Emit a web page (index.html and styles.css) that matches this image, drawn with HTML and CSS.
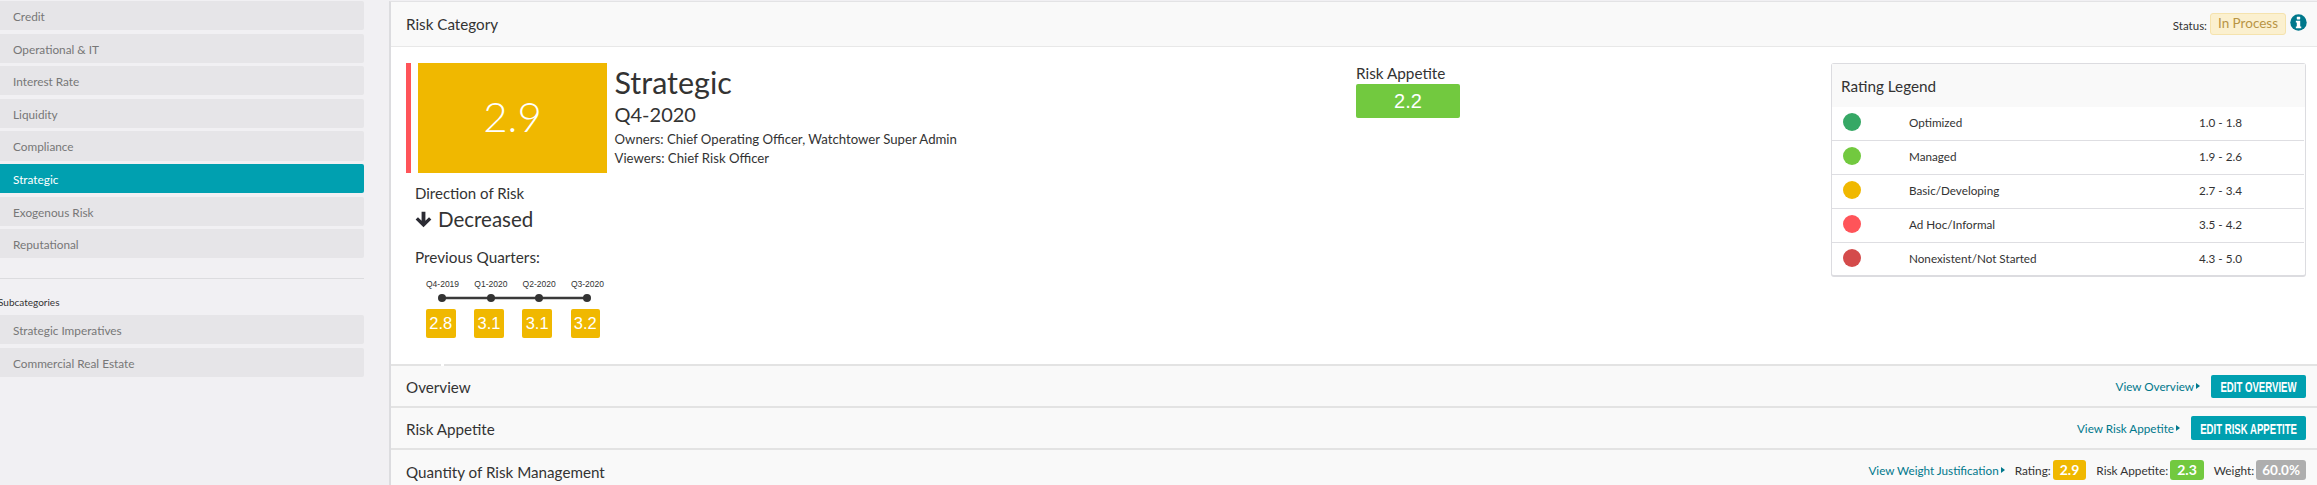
FILE: index.html
```html
<!DOCTYPE html>
<html lang="en">
<head>
<meta charset="utf-8">
<title>Risk Category</title>
<link rel="stylesheet" href="styles.css">
</head>
<body>
<div class="page">
  <aside class="sidebar">
    <nav class="nav">
      <a class="nav-item">Credit</a>
      <a class="nav-item">Operational &amp; IT</a>
      <a class="nav-item">Interest Rate</a>
      <a class="nav-item">Liquidity</a>
      <a class="nav-item">Compliance</a>
      <a class="nav-item active">Strategic</a>
      <a class="nav-item">Exogenous Risk</a>
      <a class="nav-item">Reputational</a>
    </nav>
    <hr class="side-rule">
    <div class="side-heading">Subcategories</div>
    <nav class="nav">
      <a class="nav-item">Strategic Imperatives</a>
      <a class="nav-item">Commercial Real Estate</a>
    </nav>
  </aside>
  <main class="panel">
    <header class="panel-head">
      <span class="row-title">Risk Category</span>
      <div class="status">
        <span class="status-label">Status:</span>
        <span class="status-pill">In Process</span>
        <svg class="info" viewBox="0 0 18 18" aria-hidden="true"><circle cx="9" cy="9" r="8.7" fill="#00788c"/><rect x="7.2" y="2.8" width="3.6" height="3" rx=".5" fill="#fff"/><path d="M6.2 7.2h4.6v6h1.1v1.9H6.2v-1.9h1v-4.1h-1z" fill="#fff"/></svg>
      </div>
    </header>
    <section class="overview">
      <div class="col-left">
        <div class="score-row">
          <div class="red-bar"></div>
          <div class="score">2.9</div>
          <div class="meta">
            <h1 class="meta-title">Strategic</h1>
            <div class="meta-q">Q4-2020</div>
            <div class="meta-line">Owners: Chief Operating Officer, Watchtower Super Admin</div>
            <div class="meta-line">Viewers: Chief Risk Officer</div>
          </div>
        </div>
        <div class="direction">
          <div class="label">Direction of Risk</div>
          <div class="dir-value">
            <svg class="arrow" viewBox="0 0 16 16" aria-hidden="true"><path d="M8 15.4 .6 8l2.2-2.2 3.4 3.4V.8h3.6v8.4l3.4-3.4L15.4 8z" fill="#2b2b33"/></svg>
            <span>Decreased</span>
          </div>
        </div>
        <div class="previous">
          <div class="label">Previous Quarters:</div>
          <div class="timeline">
            <div class="tl-labels"><span>Q4-2019</span><span>Q1-2020</span><span>Q2-2020</span><span>Q3-2020</span></div>
            <svg class="tl-line" viewBox="0 0 153 10" aria-hidden="true">
              <path d="M4 5H149" stroke="#3a3a3a" stroke-width="2.5"/>
              <circle cx="4" cy="5" r="4" fill="#333"/><circle cx="53" cy="5" r="4" fill="#333"/><circle cx="101" cy="5" r="4" fill="#333"/><circle cx="149" cy="5" r="4" fill="#333"/>
            </svg>
            <div class="tl-badges"><span class="q-badge">2.8</span><span class="q-badge">3.1</span><span class="q-badge">3.1</span><span class="q-badge">3.2</span></div>
          </div>
        </div>
      </div>
      <div class="col-mid">
        <div class="label">Risk Appetite</div>
        <div class="appetite">2.2</div>
      </div>
      <div class="legend">
        <div class="legend-head">Rating Legend</div>
        <div class="legend-row"><i class="dot c-opt"></i><span class="legend-name">Optimized</span><span class="legend-range">1.0 - 1.8</span></div>
        <div class="legend-row"><i class="dot c-man"></i><span class="legend-name">Managed</span><span class="legend-range">1.9 - 2.6</span></div>
        <div class="legend-row"><i class="dot c-bas"></i><span class="legend-name">Basic/Developing</span><span class="legend-range">2.7 - 3.4</span></div>
        <div class="legend-row"><i class="dot c-adh"></i><span class="legend-name">Ad Hoc/Informal</span><span class="legend-range">3.5 - 4.2</span></div>
        <div class="legend-row"><i class="dot c-non"></i><span class="legend-name">Nonexistent/Not Started</span><span class="legend-range">4.3 - 5.0</span></div>
      </div>
      <span class="notch"></span>
    </section>
    <section class="bar">
      <span class="row-title">Overview</span>
      <div class="bar-actions"><a class="view-link">View Overview<i class="tri"></i></a><a class="edit-btn"><span class="edit-text">EDIT OVERVIEW</span></a></div>
    </section>
    <section class="bar">
      <span class="row-title">Risk Appetite</span>
      <div class="bar-actions"><a class="view-link">View Risk Appetite<i class="tri"></i></a><a class="edit-btn wide"><span class="edit-text">EDIT RISK APPETITE</span></a></div>
    </section>
    <section class="bar last">
      <span class="row-title">Quantity of Risk Management</span>
      <div class="bar-actions metrics">
        <a class="view-link">View Weight Justification<i class="tri"></i></a>
        <span class="metric">Rating:<b class="chip c-bas">2.9</b></span>
        <span class="metric">Risk Appetite:<b class="chip c-man">2.3</b></span>
        <span class="metric">Weight:<b class="chip c-grey">60.0%</b></span>
      </div>
    </section>
  </main>
</div>
</body>
</html>
```
FILE: styles.css
```css
* { box-sizing: border-box; }
html, body { margin: 0; height: 485px; overflow: hidden; }
body { background: #f1f0f3; font-family: Lato, "Open Sans", sans-serif; color: #333; }
.page { display: flex; height: 485px; }

.sidebar { width: 364px; flex: none; margin-right: 25px; padding-top: 1px; }
.nav { display: flex; flex-direction: column; gap: 3.3px; }
.nav-item { display: block; height: 29.3px; padding-left: 13px; line-height: 31px; font-size: 11.8px; color: #777; background: #e6e5e8; border-radius: 0 2px 2px 0; }
.nav-item.active { background: #00a0b0; color: #fff; }
.side-rule { border: 0; border-top: 1px solid #dcdcdf; margin: 19.5px 0 0; }
.side-heading { font-size: 10px; color: #333; margin: 16px 0 6px -2px; height: 14px; line-height: 14px; }

.panel { flex: 1; min-width: 0; margin-top: 1px; background: #fff; border-top: 1px solid #e3e3e5; border-left: 2px solid #dcdcdf; display: flex; flex-direction: column; }
.panel-head { height: 45px; flex: none; background: #f9f9f9; border-bottom: 1px solid #e8e8e8; display: flex; justify-content: space-between; padding: 0 10px 0 15px; align-items: center; }
.row-title { font-size: 15.2px; color: #333; }
.status { display: flex; align-items: center; }
.status-label { font-size: 11.5px; margin-right: 3px; margin-top: 2px; }
.status-pill { height: 22px; width: 76px; text-align: center; line-height: 19px; font-size: 13.5px; color: #b89545; background: #fbf0cf; border: 1px solid #f5e3ae; border-radius: 3px; }
.info { width: 17px; height: 17px; margin-left: 4px; margin-top: -3px; }

.overview { position: relative; height: 319px; flex: none; display: flex; padding: 16px 0 0 15px; border-bottom: 2px solid #e3e3e3; }
.col-left { width: 950px; flex: none; }
.score-row { display: flex; height: 110px; }
.red-bar { width: 5px; background: #ff5459; margin-right: 7px; }
.score { width: 189px; padding-bottom: 4px; background: #f0b800; color: #fff; font-size: 42px; font-weight: 300; display: flex; align-items: center; justify-content: center; }
.meta { margin-left: 7.5px; }
.meta-title { margin: 0; font-size: 30.5px; line-height: 38px; font-weight: 400; color: #333; }
.meta-q { font-size: 20px; line-height: 26px; margin-bottom: 3px; }
.meta-line { font-size: 13.2px; line-height: 19px; }
.label { font-size: 15px; line-height: 18px; color: #333; }
.direction { margin: 11px 0 0 9px; }
.dir-value { display: flex; align-items: center; gap: 6px; font-size: 20.5px; line-height: 26px; margin-top: 4px; }
.arrow { width: 17px; height: 17px; }
.previous { margin: 16px 0 0 9px; }
.previous .label { font-size: 15.3px; }
.timeline { margin: 13px 0 0 11px; width: 190px; }
.tl-labels { display: flex; gap: 14.8px; font-family: "Liberation Sans", Arial, sans-serif; font-size: 8.5px; line-height: 10px; color: #333; }
.tl-labels span { width: 33.5px; flex: none; }
.tl-line { display: block; width: 153px; height: 10px; margin: 4px 0 0 12px; }
.tl-badges { display: flex; gap: 18.7px; margin-top: 6px; }
.q-badge { width: 29.5px; height: 29px; line-height: 28px; text-align: center; background: #f0b800; color: #fff; border-radius: 2px; font-family: "Liberation Sans", Arial, sans-serif; font-size: 16.5px; }

.col-mid { width: 475px; flex: none; padding-top: 1px; }
.col-mid .label { font-size: 15.3px; line-height: 18px; }
.appetite { width: 104px; height: 34px; margin-top: 2px; line-height: 34px; background: #72c93f; color: #fff; text-align: center; font-family: "Liberation Sans", Arial, sans-serif; font-size: 20px; border-radius: 2px; }

.legend { width: 475px; flex: none; height: 214px; border: 1px solid #dcdce0; border-bottom-width: 2px; border-radius: 3px; align-self: flex-start; }
.legend-head { height: 43px; background: #f9f9f9; padding-left: 9px; font-size: 15.3px; line-height: 45px; color: #333; }
.legend-row { display: flex; align-items: center; height: 34px; padding-bottom: 4px; border-bottom: 1px solid #dedee2; font-size: 11.7px; color: #333; margin-right: 1px; }
.legend-row:last-child { border-bottom: 0; }
.dot { width: 18px; height: 18px; border-radius: 50%; margin-left: 11px; flex: none; }
.legend-name { margin-left: 48px; width: 290px; flex: none; }
.legend-range { display: block; }
.c-opt { background: #36a865; }
.c-man { background: #72c93f; }
.c-bas { background: #f0b800; }
.c-adh { background: #ff5459; }
.c-non { background: #d44b4b; }
.c-grey { background: #aeaeae; }
.notch { position: absolute; left: 50px; bottom: -2px; width: 3px; height: 2px; background: #fff; }

.bar { height: 42px; flex: none; background: #f9f9f9; border-bottom: 2px solid #e3e3e3; display: flex; justify-content: space-between; align-items: center; padding: 0 11px 0 15px; }
.bar .row-title { margin-top: 1px; }
.bar.last { flex: 1; height: auto; border-bottom: 0; align-items: flex-start; padding-top: 10px; }
.bar.last .row-title { margin-top: 3px; }
.bar-actions { display: flex; align-items: center; }
.view-link { font-size: 11.7px; color: #00788c; display: flex; align-items: center; }
.tri { display: block; width: 0; height: 0; margin-left: 2px; border-left: 4px solid #00788c; border-top: 3.5px solid transparent; border-bottom: 3.5px solid transparent; }
.edit-btn { display: flex; justify-content: center; align-items: center; width: 95px; height: 23px; margin-left: 11px; background: #00a0b0; color: #fff; font-family: "Liberation Sans", sans-serif; font-size: 15px; font-weight: 700; border-radius: 2px; white-space: nowrap; }
.edit-btn.wide { width: 115px; height: 24px; }
.edit-text { flex: none; display: block; transform: scaleX(.64); }
.metrics { gap: 10px; }
.metric { display: flex; align-items: center; font-size: 11.8px; color: #333; }
.chip { display: block; height: 20px; line-height: 20px; padding: 0 7px; margin-left: 2px; border-radius: 3px; color: #fff; font-size: 14px; font-weight: 700; }
.chip.c-grey { padding: 0 6px; font-size: 13.5px; }
```
